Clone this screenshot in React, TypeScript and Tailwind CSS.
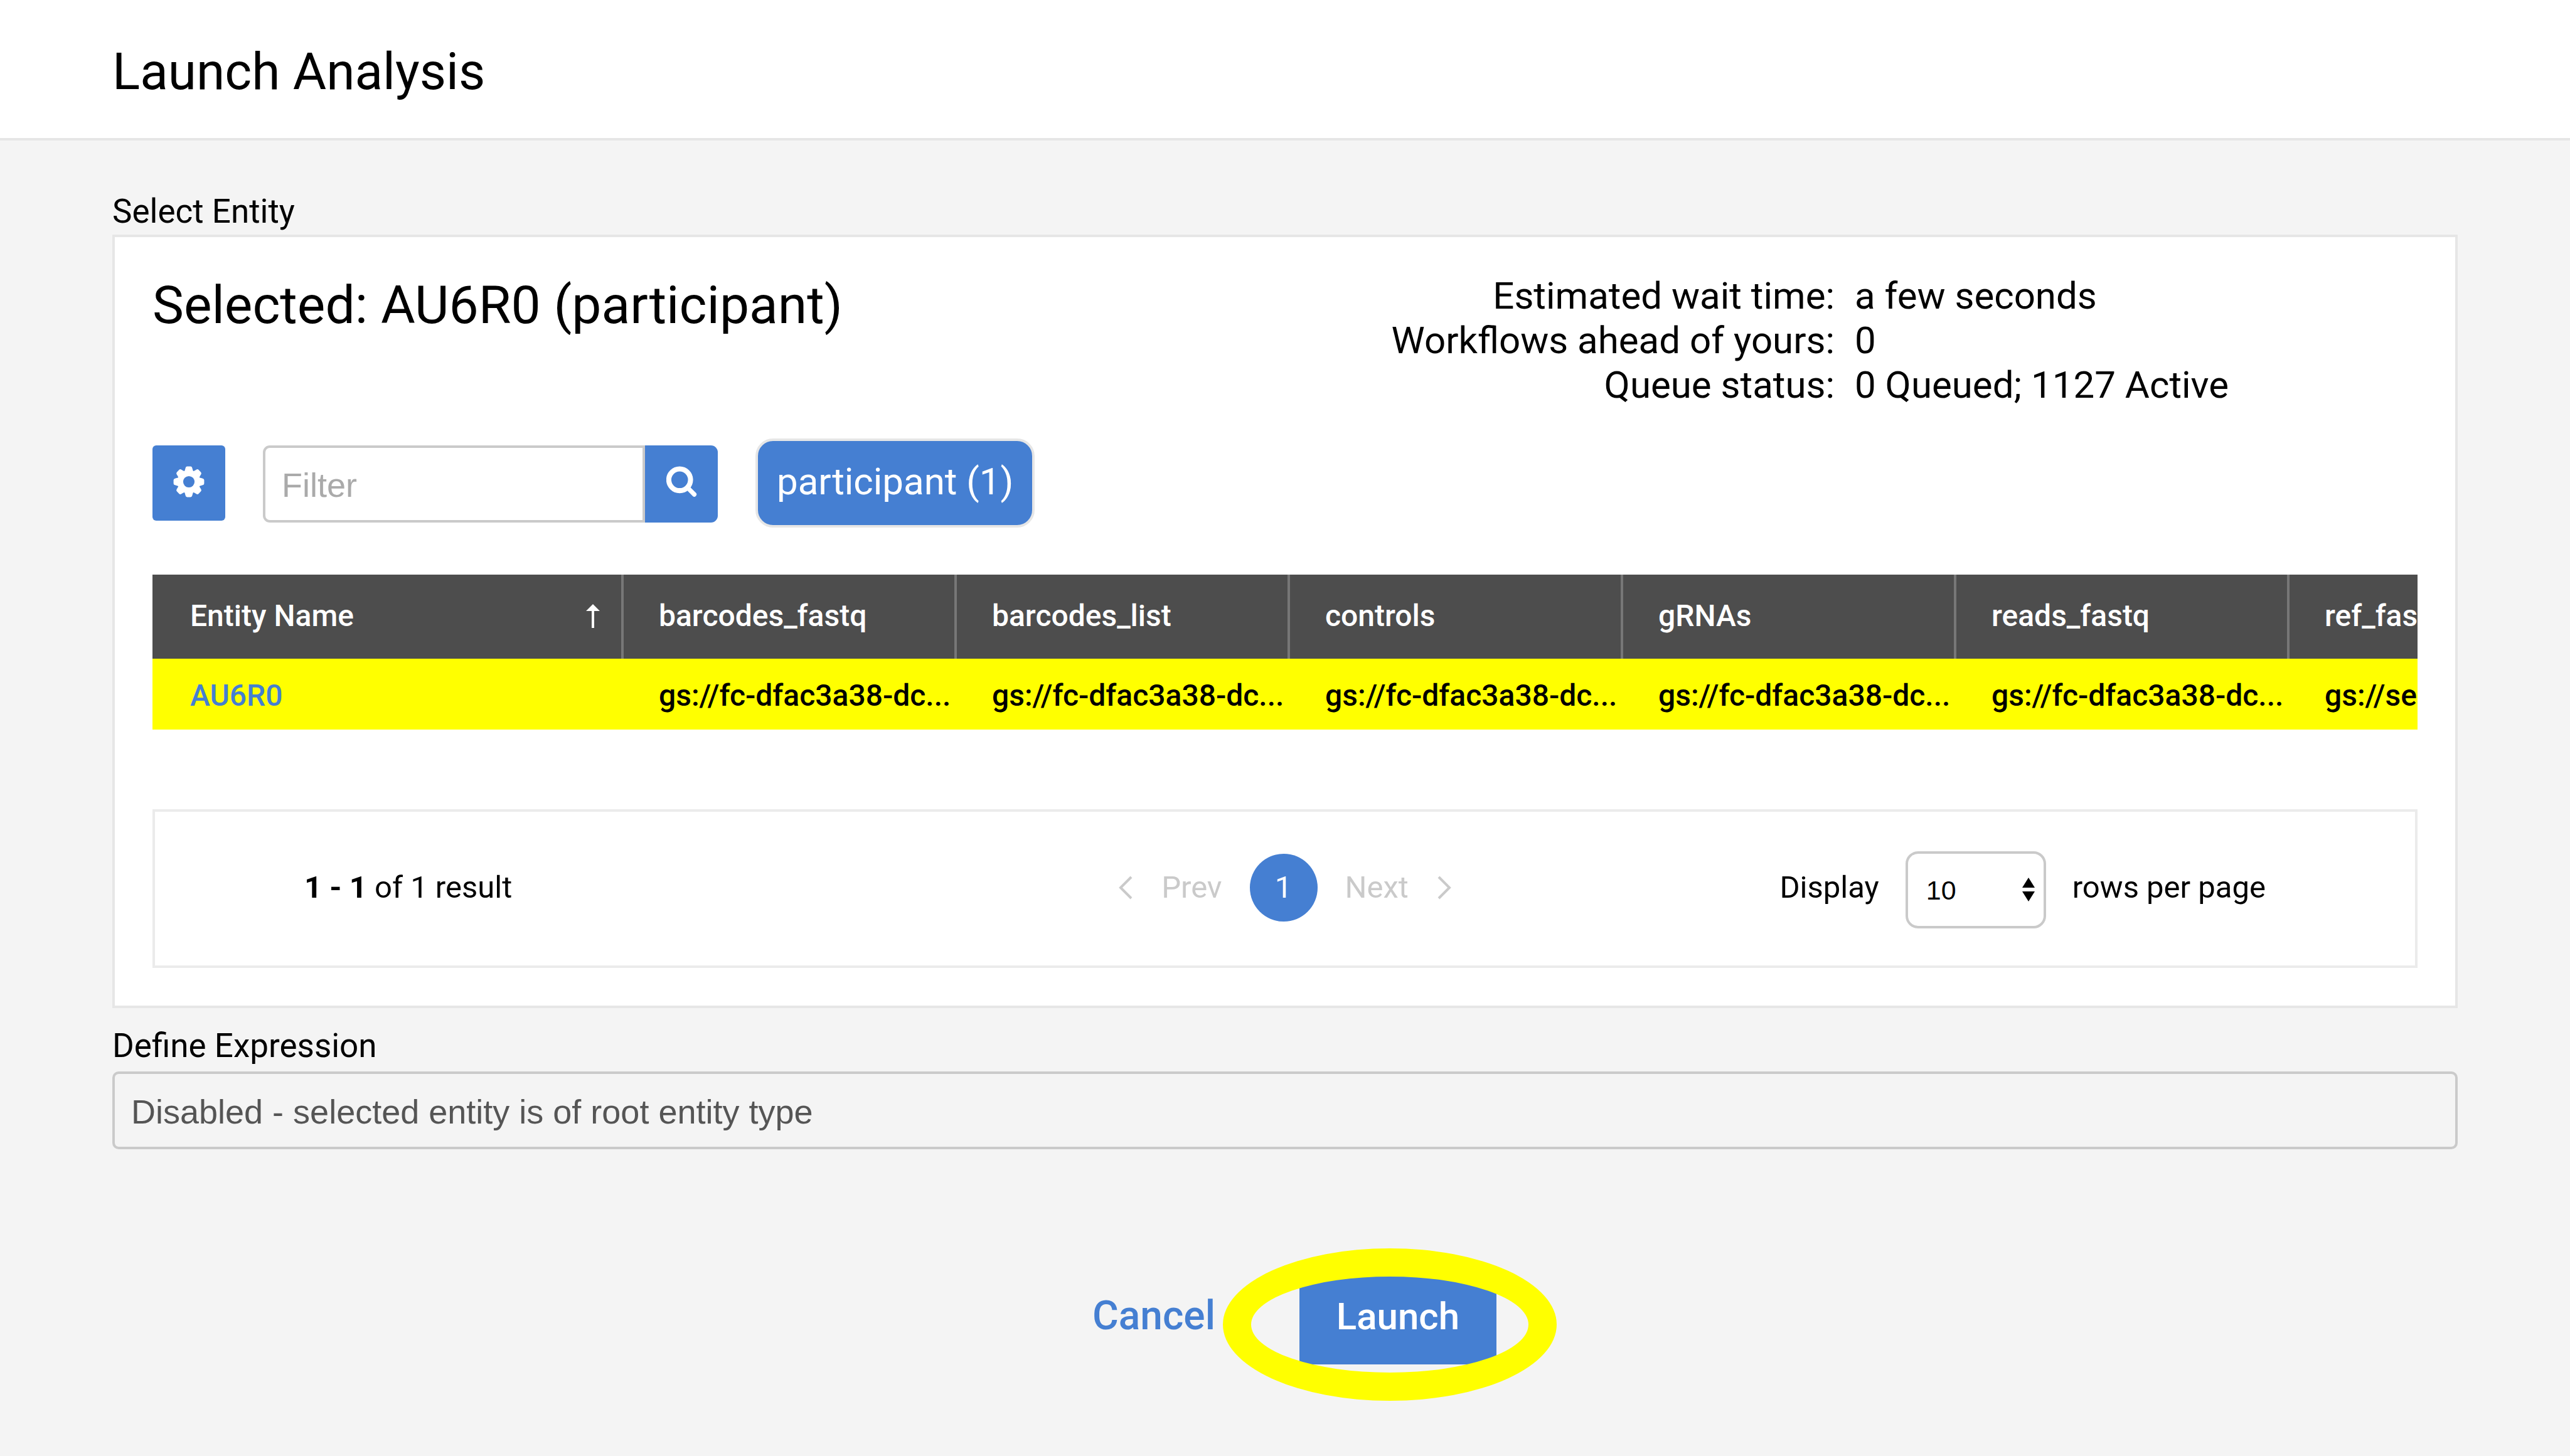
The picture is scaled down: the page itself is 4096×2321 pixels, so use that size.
const columns = ["barcodes_fastq", "barcodes_list", "controls", "gRNAs", "reads_fastq", "ref_fastq"];

const values = [
  "gs://fc-dfac3a38-dc...",
  "gs://fc-dfac3a38-dc...",
  "gs://fc-dfac3a38-dc...",
  "gs://fc-dfac3a38-dc...",
  "gs://fc-dfac3a38-dc...",
  "gs://secure-data...",
];

const stats = [
  ["Estimated wait time:", "a few seconds"],
  ["Workflows ahead of yours:", "0"],
  ["Queue status:", "0 Queued; 1127 Active"],
];

function GearIcon() {
  return (
    <svg viewBox="-84 -84 168 168" className="size-[50px]" aria-hidden="true">
      <circle r="46" fill="none" stroke="currentColor" strokeWidth="31" />
      {[0, 45, 90, 135, 180, 225, 270, 315].map((angle) => (
        <path
          key={angle}
          transform={`rotate(${angle})`}
          d="M-27 -52Q-21 -58 -20 -66L-18 -74Q-16 -82 -9 -82H9Q16 -82 18 -74L20 -66Q21 -58 27 -52Z"
          fill="currentColor"
        />
      ))}
    </svg>
  );
}

function SearchIcon() {
  return (
    <svg viewBox="0 0 164 164" className="size-[49px]" aria-hidden="true" fill="none" stroke="currentColor">
      <circle cx="71" cy="73" r="58" strokeWidth="27" />
      <path d="M116 118L149 151" strokeWidth="24" strokeLinecap="round" />
    </svg>
  );
}

function Chevron({ right = false }: { right?: boolean }) {
  return (
    <svg viewBox="0 0 22 38" className="h-[38px] w-[22px]" fill="none" stroke="currentColor" strokeWidth="4" aria-hidden="true">
      <path d={right ? "M2 2L19 19L2 36" : "M20 2L3 19L20 36"} />
    </svg>
  );
}

export default function App() {
  return (
    <div className="min-h-screen bg-[#f4f4f4] font-[Roboto,sans-serif] text-black">
      <header className="border-b-4 border-[#e6e6e6] bg-white px-[179px] pt-[66px] pb-[58px]">
        <h1 className="text-[82px] leading-[96px]">Launch Analysis</h1>
      </header>

      <main className="px-[179px] pt-[81px]">
        <h2 className="mb-[5px] text-[53px] leading-[64px]">Select Entity</h2>
        <section className="border-4 border-[#e6e6e6] bg-white px-[60px] pt-[58px] pb-[60px]">
          <div className="flex">
            <h3 className="w-1/2 text-[84px] leading-[102px]">Selected: AU6R0 (participant)</h3>
            <dl className="w-1/2 text-[60px] leading-[71px]">
              {stats.map(([label, value]) => (
                <div key={label} className="grid grid-cols-[876px_1fr] gap-x-[32px]">
                  <dt className="text-right">{label}</dt>
                  <dd>{value}</dd>
                </div>
              ))}
            </dl>
          </div>

          <div className="mt-[50px] flex items-start gap-[60px]">
            <button type="button" aria-label="Table settings" className="mt-[11px] flex h-[120px] w-[116px] items-center justify-center rounded-[6px] bg-[#457fd2] pb-[4px] text-white">
              <GearIcon />
            </button>
            <form className="mt-[11px] flex h-[123px]">
              <input
                type="text"
                placeholder="Filter"
                aria-label="Filter"
                className="w-[609px] rounded-l-[11px] border-4 border-[#cacaca] bg-white px-[26px] pt-[4px] font-['Liberation_Sans',sans-serif] text-[54px] placeholder:text-[#aaaaaa]"
              />
              <button type="button" aria-label="Search" className="flex w-[116px] items-center justify-center rounded-r-[11px] bg-[#457fd2] pb-[8px] text-white">
                <SearchIcon />
              </button>
            </form>
            <button type="button" className="h-[142px] rounded-[28px] border-4 border-[#e6e6e6] bg-[#457fd2] px-[30px] pb-[6px] text-[60px] leading-[71px] text-white">
              participant (1)
            </button>
          </div>

          <div className="mt-[75px] overflow-hidden">
            <table className="w-[3937px] table-fixed border-separate border-spacing-0 text-left text-[48px] leading-[60px] font-medium">
              <thead>
                <tr className="h-[134px] bg-[#4d4d4d] text-white">
                  <th className="w-[751px] border-r-4 border-[#777777] pr-[34px] pb-[2px] pl-[60px] font-medium">
                    <span className="flex items-center justify-between">
                      Entity Name
                      <svg viewBox="0 0 22 38" className="h-[38px] w-[22px]" fill="currentColor" aria-label="Sorted ascending">
                        <path d="M11 0L22 11H13V38H9V11H0Z" />
                      </svg>
                    </span>
                  </th>
                  {columns.map((name) => (
                    <th key={name} className="w-[531px] border-r-4 border-[#777777] pb-[2px] pl-[56px] font-medium">
                      {name}
                    </th>
                  ))}
                </tr>
              </thead>
              <tbody>
                <tr className="h-[113px] bg-[#ffff00] whitespace-nowrap">
                  <td className="pt-[4px] pl-[60px]">
                    <a href="#AU6R0" className="text-[#457fd2]">AU6R0</a>
                  </td>
                  {values.map((value, i) => (
                    <td key={i} className="pt-[4px] pl-[56px]">{value}</td>
                  ))}
                </tr>
              </tbody>
            </table>
          </div>

          <div className="mt-[127px] grid h-[253px] grid-cols-[1fr_auto_1fr] items-center border-4 border-[#ebebeb] px-[238px] pb-[4px] text-[49px] leading-[60px]">
            <p>
              <b>1 - 1</b> of 1 result
            </p>
            <nav aria-label="Pagination" className="flex items-center text-[#cacaca]">
              <button type="button" disabled className="flex items-center gap-[46px]">
                <Chevron />
                Prev
              </button>
              <button type="button" aria-current="page" className="mx-[44px] size-[108px] rounded-full bg-[#457fd2] text-white">
                1
              </button>
              <button type="button" disabled className="flex items-center gap-[46px]">
                Next
                <Chevron right />
              </button>
            </nav>
            <div className="flex items-center justify-end gap-[42px]">
              <label htmlFor="rows">Display</label>
              <span className="relative mt-[8px] block">
                <select
                  id="rows"
                  defaultValue="10"
                  className="block h-[123px] w-[224px] appearance-none rounded-[20px] border-4 border-[#cacaca] bg-white pl-[29px] font-['Liberation_Sans',sans-serif] text-[43px] leading-[60px]"
                >
                  <option>10</option>
                  <option>20</option>
                  <option>50</option>
                  <option>100</option>
                </select>
                <svg viewBox="0 0 20 38" className="pointer-events-none absolute top-[42px] right-[18px] h-[38px] w-[20px]" aria-hidden="true">
                  <path d="M10 0L20 16H0ZM0 22H20L10 38Z" />
                </svg>
              </span>
              <label htmlFor="rows">rows per page</label>
            </div>
          </div>
        </section>

        <label htmlFor="expression" className="mt-[28px] mb-[9px] block text-[53px] leading-[64px]">
          Define Expression
        </label>
        <input
          id="expression"
          type="text"
          disabled
          placeholder="Disabled - selected entity is of root entity type"
          className="block h-[124px] w-full rounded-[10px] border-4 border-[#cacaca] bg-[#f4f4f4] px-[26px] pt-[4px] font-['Liberation_Sans',sans-serif] text-[54px] placeholder:text-[#555555]"
        />

        <div className="mt-[188px] flex items-center justify-center gap-[134px] pl-[30px] leading-[75px] font-medium">
          <a href="#cancel" className="text-[64px] leading-[75px] text-[#457fd2]">Cancel</a>
          <span className="relative">
            <button type="button" className="h-[155px] w-[314px] bg-[#457fd2] pt-[2px] text-[60px] text-white">
              Launch
            </button>
            <span className="pointer-events-none absolute top-[-30px] left-[-122px] h-[243px] w-[532px] rounded-[50%] border-[45px] border-[#ffff00]" />
          </span>
        </div>
      </main>
    </div>
  );
}
